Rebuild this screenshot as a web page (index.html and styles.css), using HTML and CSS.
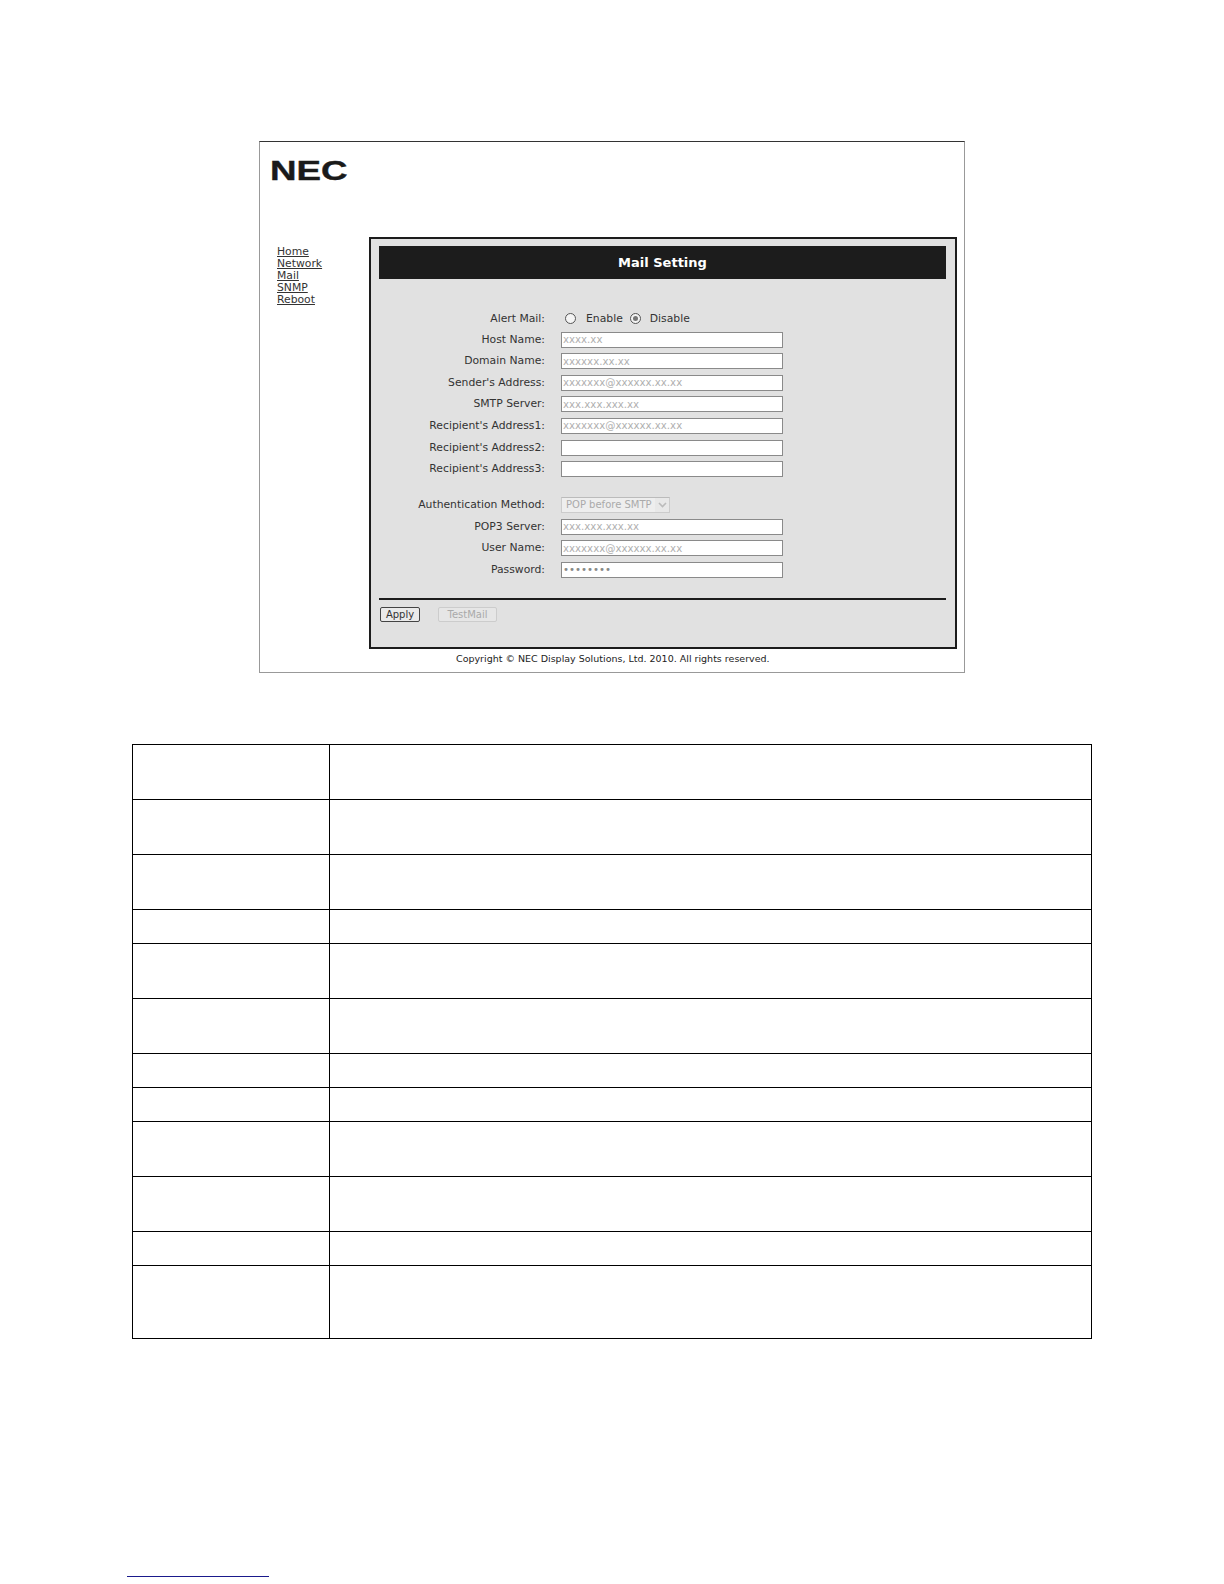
FILE: index.html
```html
<!DOCTYPE html>
<html lang="en">

<head>
    <meta charset="UTF-8">
    <title>Mail Setting</title>
    <link rel="stylesheet" href="styles.css">
</head>

<body>
    <div class="frame">
        <div class="logo">NEC</div>
        <div class="frame-body">
            <nav class="side-nav">
                <a href="#">Home</a>
                <a href="#">Network</a>
                <a href="#">Mail</a>
                <a href="#">SNMP</a>
                <a href="#">Reboot</a>
            </nav>
            <div class="panel-column">
                <main class="panel">
                    <h1 class="panel-title">Mail Setting</h1>
                    <div class="fields">
                        <span class="field-label field-label-alert">Alert Mail:</span>
                        <div class="radio-group">
                            <span class="radio"></span><span>Enable</span>
                            <span class="radio radio-on"></span><span>Disable</span>
                        </div>
                        <span class="field-label">Host Name:</span>
                        <input class="text-field" type="text" value="xxxx.xx" disabled>
                        <span class="field-label">Domain Name:</span>
                        <input class="text-field" type="text" value="xxxxxx.xx.xx" disabled>
                        <span class="field-label">Sender's Address:</span>
                        <input class="text-field" type="text" value="xxxxxxx@xxxxxx.xx.xx" disabled>
                        <span class="field-label">SMTP Server:</span>
                        <input class="text-field" type="text" value="xxx.xxx.xxx.xx" disabled>
                        <span class="field-label">Recipient's Address1:</span>
                        <input class="text-field" type="text" value="xxxxxxx@xxxxxx.xx.xx" disabled>
                        <span class="field-label">Recipient's Address2:</span>
                        <input class="text-field" type="text" disabled>
                        <span class="field-label">Recipient's Address3:</span>
                        <input class="text-field" type="text" disabled>
                    </div>
                    <div class="fields fields-auth">
                        <span class="field-label">Authentication Method:</span>
                        <div class="select-box">
                            <span class="select-value">POP before SMTP</span>
                            <span class="select-arrow">
                                <svg width="9" height="6" viewBox="0 0 9 6">
                                    <path d="M1 1l3.5 3.5L8 1" fill="none" stroke="#bbb" stroke-width="1.6" />
                                </svg>
                            </span>
                        </div>
                        <span class="field-label">POP3 Server:</span>
                        <input class="text-field" type="text" value="xxx.xxx.xxx.xx" disabled>
                        <span class="field-label">User Name:</span>
                        <input class="text-field" type="text" value="xxxxxxx@xxxxxx.xx.xx" disabled>
                        <span class="field-label">Password:</span>
                        <input class="text-field text-field-pass" type="password" value="xxxxxxxx" disabled>
                    </div>
                    <div class="panel-rule"></div>
                    <div class="panel-buttons">
                        <button class="btn">Apply</button>
                        <button class="btn btn-off" disabled>TestMail</button>
                    </div>
                </main>
                <div class="copyright">Copyright &copy; NEC Display Solutions, Ltd. 2010. All rights reserved.</div>
            </div>
        </div>
    </div>

    <table class="desc-table">
        <tr class="row-two"><td class="col-name"></td><td></td></tr>
        <tr class="row-two"><td></td><td></td></tr>
        <tr class="row-two"><td></td><td></td></tr>
        <tr class="row-one"><td></td><td></td></tr>
        <tr class="row-two"><td></td><td></td></tr>
        <tr class="row-two"><td></td><td></td></tr>
        <tr class="row-one"><td></td><td></td></tr>
        <tr class="row-one"><td></td><td></td></tr>
        <tr class="row-two"><td></td><td></td></tr>
        <tr class="row-two"><td></td><td></td></tr>
        <tr class="row-one"><td></td><td></td></tr>
        <tr class="row-three"><td></td><td></td></tr>
    </table>

    <div class="footnote-rule"></div>
</body>

</html>
```

FILE: styles.css
```css
:root {
    --ui-font: "DejaVu Sans", sans-serif;
    --text: #333;
    --field-text: #b0b0b0;
    --panel: #e1e1e1;
    --dark: #1c1c1c;
}

* {
    box-sizing: border-box;
    margin: 0;
    padding: 0;
}

body {
    height: 1584px;
    overflow: hidden;
    padding-top: 141px;
    background: #fff;
    color: var(--text);
    font-family: var(--ui-font);
    font-size: 10.8px;
}

.frame {
    width: 706px;
    height: 532px;
    margin-left: 259px;
    padding: 15px 7px 0 10px;
    border: 1px solid #999;
    border-top-color: #333;
}

.logo {
    width: 57px;
    height: 28px;
    margin-bottom: 52px;
    color: #1a1a1a;
    font-family: "Liberation Sans", sans-serif;
    font-size: 27px;
    font-weight: 700;
    line-height: 28px;
    -webkit-text-stroke: 0.4px #1a1a1a;
    transform: scaleX(1.36);
    transform-origin: left center;
}

.frame-body {
    display: flex;
}

.side-nav {
    display: flex;
    flex-direction: column;
    width: 92px;
    margin-left: 7px;
    padding-top: 9px;
    flex-shrink: 0;
    line-height: 12px;
}

.side-nav a {
    color: var(--text);
}

.panel-column {
    flex: 1;
}

.panel {
    height: 412px;
    padding: 7px 9px 0 8px;
    border: 2px solid var(--dark);
    background: var(--panel);
}

.panel-title {
    height: 33px;
    margin-bottom: 32px;
    background: var(--dark);
    color: #fff;
    font-size: 13px;
    font-weight: 700;
    line-height: 33px;
    text-align: center;
}

.fields {
    display: grid;
    grid-template-columns: 166px 222px;
    column-gap: 16px;
    row-gap: 5.6px;
    align-items: center;
}

.fields-auth {
    margin-top: 20px;
}

.field-label {
    line-height: 16px;
    text-align: right;
}

.field-label-alert {
    line-height: 15px;
}

.text-field {
    width: 222px;
    height: 16px;
    padding: 0 1px;
    border: 1px solid #8a8a8a;
    border-radius: 0;
    background: #fff;
    color: var(--field-text);
    font-family: var(--ui-font);
    font-size: 10.2px;
}

.text-field-pass {
    color: #888;
}

.radio-group {
    display: flex;
    align-items: center;
    height: 15px;
    padding-left: 4px;
}

.radio {
    position: relative;
    width: 11px;
    height: 11px;
    margin-right: 10px;
    border: 1px solid #555;
    border-radius: 50%;
    background: #f4f4f4;
}

.radio + span + .radio {
    margin-left: 7px;
    margin-right: 9px;
}

.radio-on::after {
    content: "";
    position: absolute;
    top: 2px;
    left: 2px;
    width: 5px;
    height: 5px;
    border-radius: 50%;
    background: #777;
}

.select-box {
    display: flex;
    width: 109px;
    height: 16px;
    border: 1px solid #ccc;
    border-top-color: #bbb;
    background: #e8e8e8;
}

.select-value {
    width: 93px;
    padding-left: 4px;
    background: #eee;
    color: #aaa;
    font-size: 10px;
    line-height: 14px;
    white-space: nowrap;
}

.select-arrow {
    display: flex;
    flex: 1;
    align-items: center;
    justify-content: center;
}

.panel-rule {
    height: 2px;
    margin-top: 20.5px;
    background: var(--dark);
}

.panel-buttons {
    display: flex;
    gap: 18px;
    margin: 7px 0 0 1px;
}

.btn {
    width: 40px;
    height: 15px;
    border: 1px solid #444;
    border-radius: 2px;
    background: #eaeaea;
    color: var(--text);
    font-family: var(--ui-font);
    font-size: 10px;
    line-height: 13px;
}

.btn-off {
    width: 59px;
    border-color: #ccc;
    background: #e6e6e6;
    color: #aaa;
}

.copyright {
    margin-top: 4px;
    padding-left: 87px;
    color: #222;
    font-size: 9.5px;
    line-height: 12px;
    white-space: nowrap;
}

.desc-table {
    width: 960px;
    margin: 71px 0 0 132px;
    border-collapse: collapse;
    table-layout: fixed;
}

.desc-table td {
    border: 1px solid #000;
}

.col-name {
    width: 197px;
}

.row-one {
    height: 34px;
}

.row-two {
    height: 55px;
}

.row-three {
    height: 73px;
}

.footnote-rule {
    width: 142px;
    height: 1px;
    margin: 237px 0 0 127px;
    background: #1a1a8c;
}
```
